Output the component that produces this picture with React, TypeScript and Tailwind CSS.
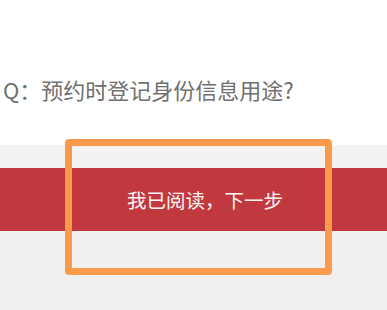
import React from 'react';

const FONT = '"Noto Sans CJK SC", "Noto Sans", sans-serif';

export default function App() {
  return (
    <div className="relative w-[387px] h-[310px] overflow-hidden bg-white" style={{ fontFamily: FONT }}>
      {/* Question */}
      <div className="h-[145px] bg-white pt-[76px] pl-[3px]">
        <p className="text-[22px] leading-[26px] text-[#707070] whitespace-nowrap">Q：预约时登记身份信息用途?</p>
      </div>

      {/* Footer area with confirm button */}
      <div className="h-[165px] bg-gradient-to-b from-[#f4f3f1] to-[#efefee] pt-[23px]">
        <button className="w-full h-[63px] bg-[#c1393f] flex items-center justify-center pl-[23px]">
          <span className="text-[19.5px] leading-none text-[#fbf4f4]">我已阅读，下一步</span>
        </button>
      </div>

      {/* Highlight annotation */}
      <div className="absolute left-[65px] top-[139px] w-[267px] h-[136px] border-[7px] border-[#fb9a4b] rounded-[4px] pointer-events-none" />
    </div>
  );
}
